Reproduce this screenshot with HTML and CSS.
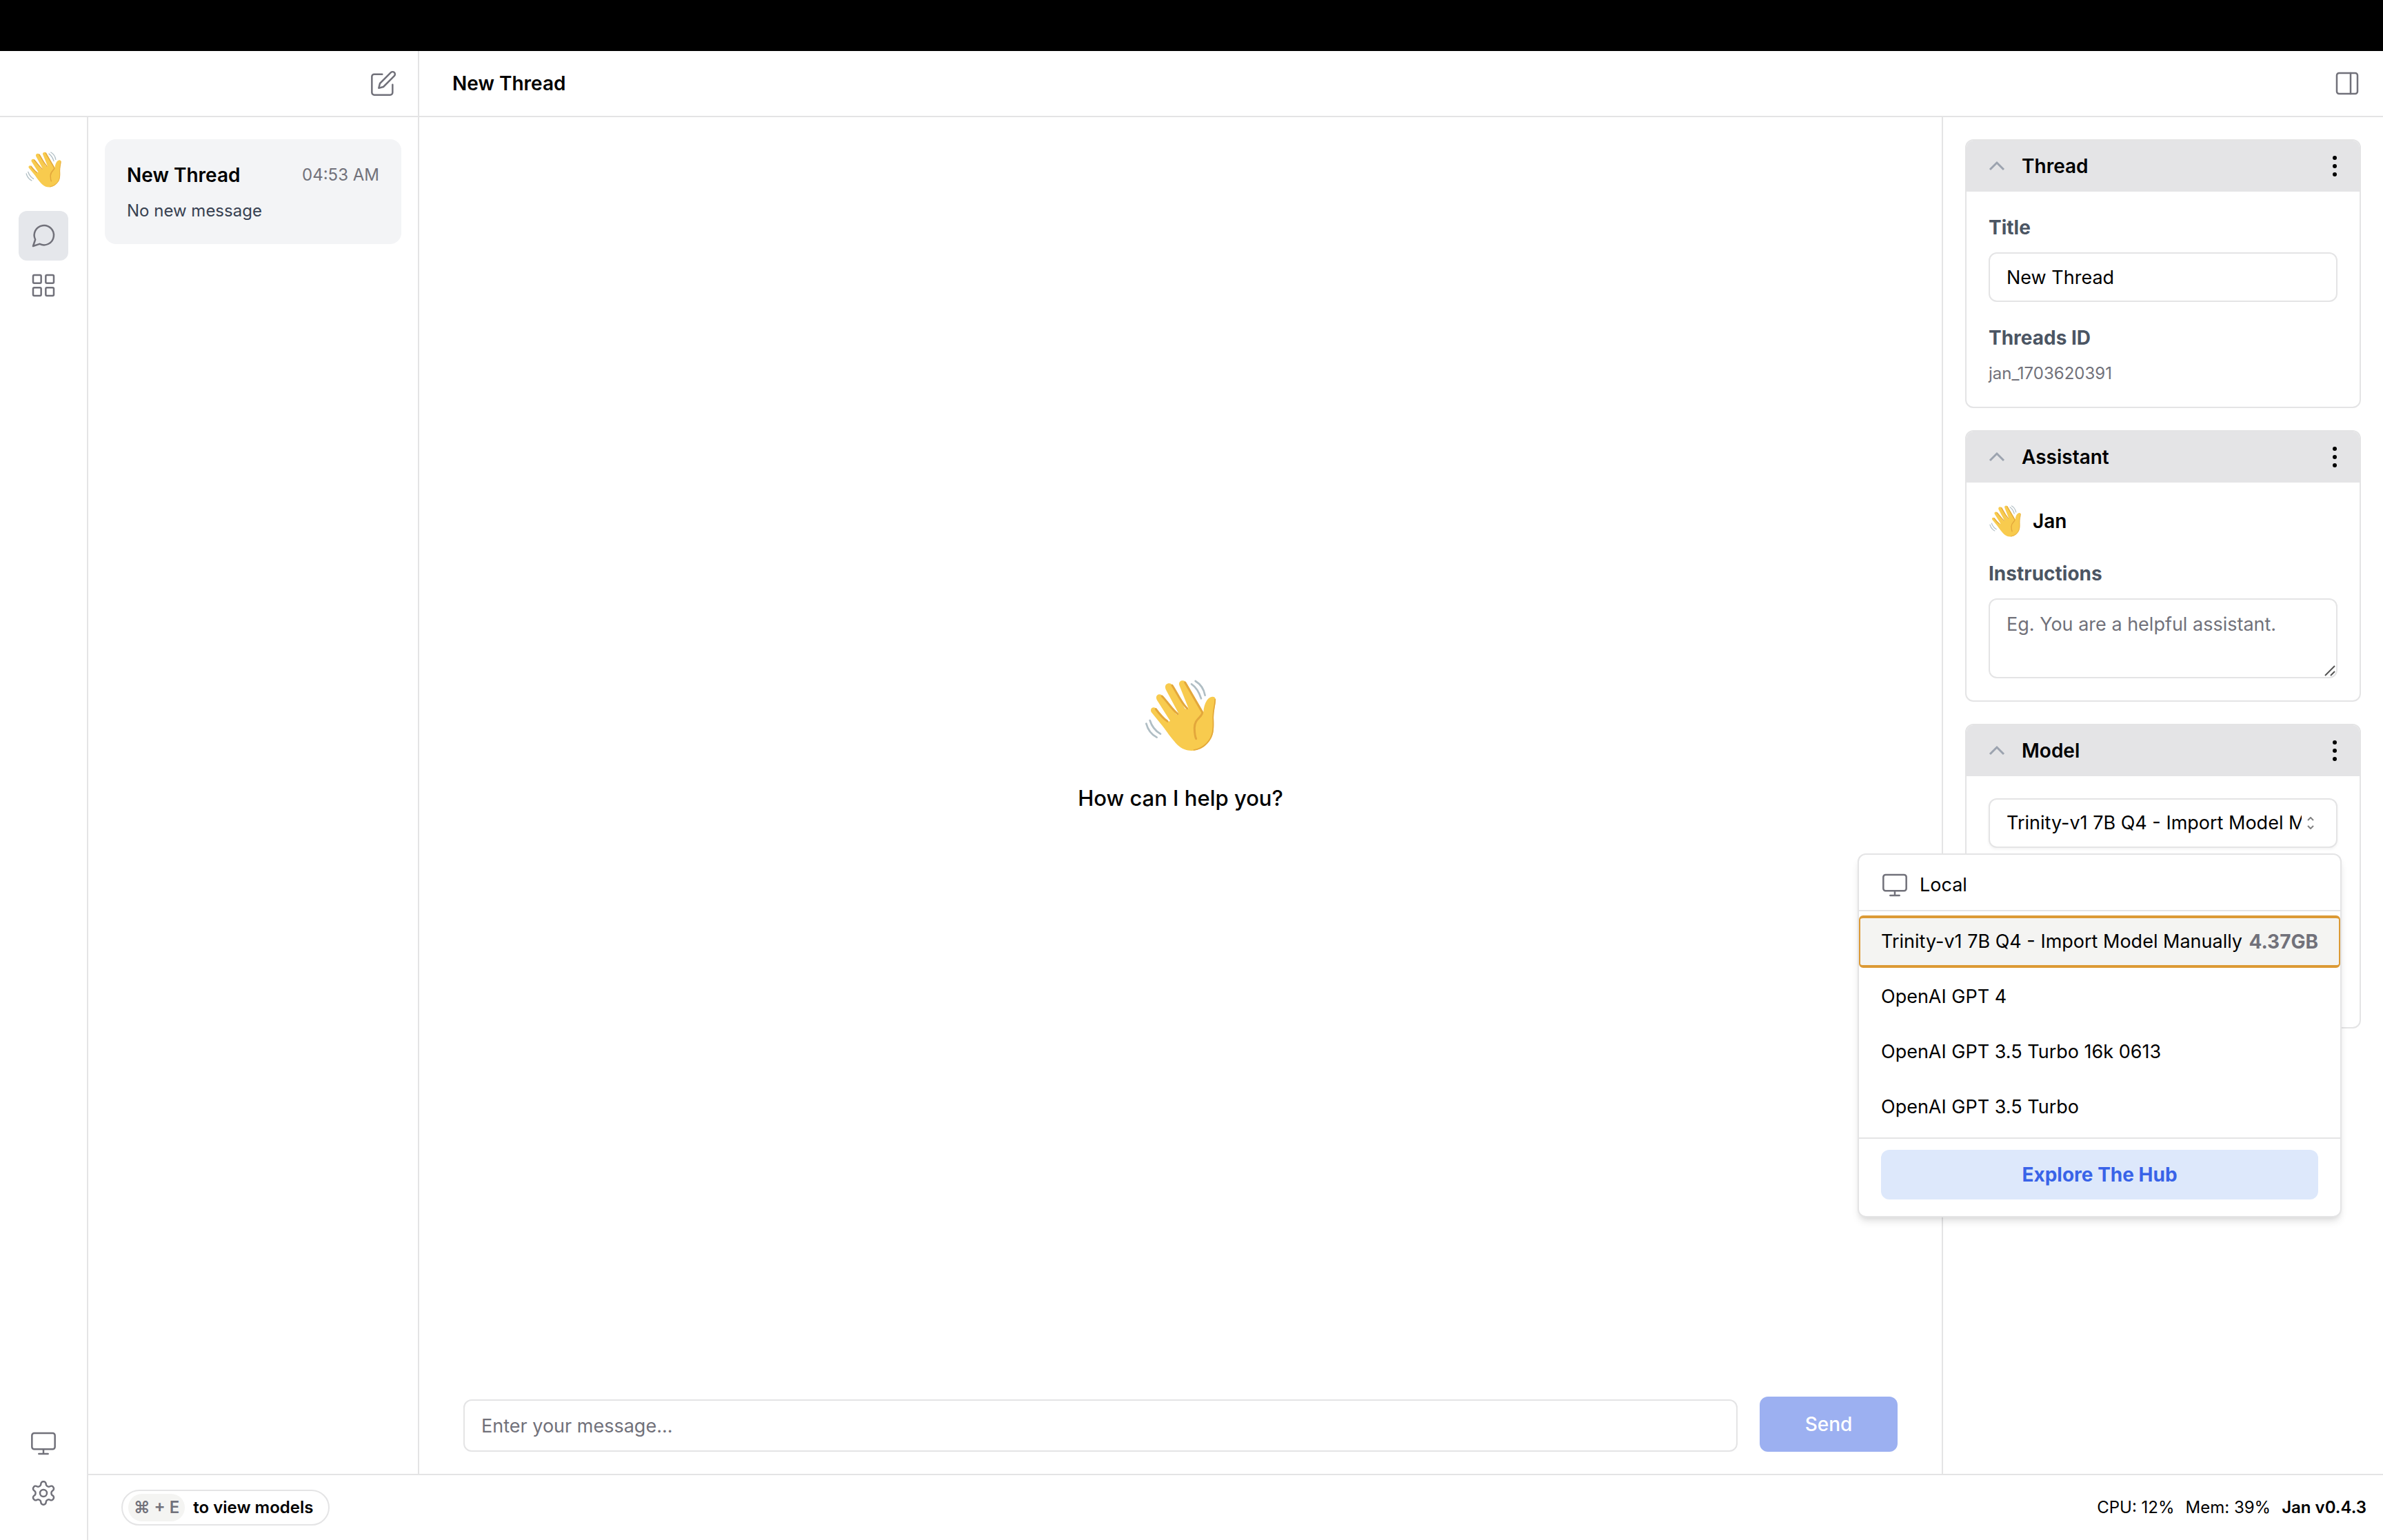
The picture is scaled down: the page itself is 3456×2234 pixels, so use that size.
FILE: index.html
```html
<!DOCTYPE html>
<html lang="en">
<head>
  <meta charset="utf-8">
  <meta name="viewport" content="width=device-width, initial-scale=1">
  <title>Jan</title>
  <link rel="stylesheet" href="styles.css">
</head>
<body>
  <svg class="sprite" aria-hidden="true">
    <symbol id="wave" viewBox="480 138 312 312">
      <path fill="#f8cb4e" d="M509 279C503 267 511 258 521 259C528 260 532 264 536 270L579 318Q586 322 591 317L534 227C526 213 534 202 545 202C552 202 557 206 562 212L617 288Q624 292 629 287L573 182C565 167 573 154 586 154C595 154 600 159 605 167L655 263Q664 268 671 263L632 165C626 151 635 142 645 142C654 142 659 147 664 156L736 279C737 250 750 215 774 212C785 211 790 218 789 230C787 252 780 272 780 305C782 355 782 386 752 417C725 447 684 452 655 442C628 432 613 411 598 393C582 372 568 352 557 338Z"/>
      <g fill="none" stroke="#e3a73b" stroke-width="9" stroke-linecap="round" stroke-linejoin="round">
        <path d="M529 266C542 284 560 306 579 319"/>
        <path d="M556 210C576 230 600 268 624 287"/>
        <path d="M600 163C616 186 640 240 665 263"/>
        <path d="M656 150L731 280C732 302 696 306 697 350Q698 382 704 395"/>
        <path stroke-width="5" d="M787 224C785 258 777 273 778 306C780 354 779 386 750 415Q727 439 694 444"/>
      </g>
      <g fill="none" stroke="#b0bec4" stroke-width="8" stroke-linecap="round">
        <path d="M487 329Q498 371 533 389"/>
        <path d="M503 315Q515 354 549 374"/>
        <path d="M684 157Q712 176 726 220"/>
        <path d="M701 144Q735 164 743 206"/>
      </g>
    </symbol>
    <symbol id="monitor" viewBox="0 0 24 24">
      <rect x="2" y="3" width="20" height="14" rx="2"/>
      <path d="M8 21h8M12 17v4"/>
    </symbol>
    <symbol id="chevron" viewBox="0 0 24 24">
      <path d="M2 17 12 7l10 10"/>
    </symbol>
    <symbol id="dots" viewBox="0 0 8 32">
      <circle cx="4" cy="4" r="3"/><circle cx="4" cy="16" r="3"/><circle cx="4" cy="28" r="3"/>
    </symbol>
  </svg>

  <div class="app">
    <div class="titlebar"></div>

    <header class="topbar">
      <div class="topbar-left">
        <button class="icon-button" type="button" aria-label="Create thread">
          <svg class="icon" viewBox="0 0 24 24"><path d="M11 4H4a2 2 0 0 0-2 2v14a2 2 0 0 0 2 2h14a2 2 0 0 0 2-2v-7"/><path d="M18.5 2.5a2.12 2.12 0 0 1 3 3L12 15l-4 1 1-4Z"/></svg>
        </button>
      </div>
      <div class="topbar-main">
        <h1 class="heading">New Thread</h1>
        <button class="icon-button" type="button" aria-label="Toggle panel">
          <svg class="icon" viewBox="0 0 24 24"><rect x="3" y="3" width="18" height="18" rx="2"/><path d="M15 3v18"/></svg>
        </button>
      </div>
    </header>

    <div class="body">
      <nav class="ribbon">
        <div class="ribbon-logo"><svg class="wave wave-nav"><use href="#wave"/></svg></div>
        <a class="ribbon-item active" href="#thread" aria-label="Thread">
          <svg class="icon" viewBox="0 0 24 24"><path d="m3 21 1.9-5.7a8.5 8.5 0 1 1 3.8 3.8z"/></svg>
        </a>
        <a class="ribbon-item" href="#hub" aria-label="Hub">
          <svg class="icon" viewBox="0 0 24 24"><rect x="3" y="3" width="7" height="7" rx="1"/><rect x="14" y="3" width="7" height="7" rx="1"/><rect x="14" y="14" width="7" height="7" rx="1"/><rect x="3" y="14" width="7" height="7" rx="1"/></svg>
        </a>
        <a class="ribbon-item ribbon-bottom" href="#system" aria-label="System monitor">
          <svg class="icon"><use href="#monitor"/></svg>
        </a>
        <a class="ribbon-item" href="#settings" aria-label="Settings">
          <svg class="icon" viewBox="0 0 24 24"><path d="M12.22 2h-.44a2 2 0 0 0-2 2v.18a2 2 0 0 1-1 1.73l-.43.25a2 2 0 0 1-2 0l-.15-.08a2 2 0 0 0-2.73.73l-.22.38a2 2 0 0 0 .73 2.73l.15.1a2 2 0 0 1 1 1.72v.51a2 2 0 0 1-1 1.74l-.15.09a2 2 0 0 0-.73 2.73l.22.38a2 2 0 0 0 2.73.73l.15-.08a2 2 0 0 1 2 0l.43.25a2 2 0 0 1 1 1.73V20a2 2 0 0 0 2 2h.44a2 2 0 0 0 2-2v-.18a2 2 0 0 1 1-1.73l.43-.25a2 2 0 0 1 2 0l.15.08a2 2 0 0 0 2.73-.73l.22-.39a2 2 0 0 0-.73-2.73l-.15-.08a2 2 0 0 1-1-1.74v-.5a2 2 0 0 1 1-1.74l.15-.09a2 2 0 0 0 .73-2.73l-.22-.38a2 2 0 0 0-2.73-.73l-.15.08a2 2 0 0 1-2 0l-.43-.25a2 2 0 0 1-1-1.73V4a2 2 0 0 0-2-2z"/><circle cx="12" cy="12" r="3"/></svg>
        </a>
      </nav>

      <div class="workspace">
        <div class="columns">
          <aside class="threads">
            <a class="thread" href="#new-thread">
              <span class="thread-top">
                <span class="heading">New Thread</span>
                <time class="small muted">04:53 AM</time>
              </span>
              <span class="small thread-note">No new message</span>
            </a>
          </aside>

          <main class="chat">
            <div class="welcome">
              <svg class="wave wave-large"><use href="#wave"/></svg>
              <p class="welcome-text">How can I help you?</p>
            </div>
            <form class="composer">
              <input class="field composer-input" type="text" aria-label="Message" placeholder="Enter your message...">
              <button class="send" type="button" disabled>Send</button>
            </form>
          </main>

          <aside class="panel">
            <section class="card">
              <header class="card-head">
                <svg class="chevron"><use href="#chevron"/></svg>
                <h2 class="heading">Thread</h2>
                <button class="icon-button card-menu" type="button" aria-label="Thread options"><svg class="dots"><use href="#dots"/></svg></button>
              </header>
              <div class="card-body">
                <label class="label" for="title">Title</label>
                <input class="field" id="title" type="text" value="New Thread">
                <p class="label label-next">Threads ID</p>
                <p class="small muted">jan_1703620391</p>
              </div>
            </section>

            <section class="card">
              <header class="card-head">
                <svg class="chevron"><use href="#chevron"/></svg>
                <h2 class="heading">Assistant</h2>
                <button class="icon-button card-menu" type="button" aria-label="Assistant options"><svg class="dots"><use href="#dots"/></svg></button>
              </header>
              <div class="card-body">
                <div class="assistant"><svg class="wave wave-small"><use href="#wave"/></svg><span class="heading">Jan</span></div>
                <label class="label label-next" for="instructions">Instructions</label>
                <div class="area-wrap">
                  <textarea class="field area" id="instructions" placeholder="Eg. You are a helpful assistant."></textarea>
                  <svg class="grip" viewBox="0 0 16 16"><path d="M1 15 15 1M9 15l6-6"/></svg>
                </div>
              </div>
            </section>

            <section class="card">
              <header class="card-head">
                <svg class="chevron"><use href="#chevron"/></svg>
                <h2 class="heading">Model</h2>
                <button class="icon-button card-menu" type="button" aria-label="Model options"><svg class="dots"><use href="#dots"/></svg></button>
              </header>
              <div class="card-body model-body">
                <div class="select-wrap">
                  <select class="field select" aria-label="Model">
                    <option>Trinity-v1 7B Q4 - Import Model Manually</option>
                  </select>
                  <svg class="select-arrows" viewBox="0 0 12 18"><path d="M2 5l4-4 4 4M2 13l4 4 4-4"/></svg>
                  <div class="menu">
                    <div class="menu-head"><svg class="icon"><use href="#monitor"/></svg><span>Local</span></div>
                    <ul class="menu-list" role="listbox" aria-label="Models">
                      <li class="option selected" role="option" aria-selected="true"><span>Trinity-v1 7B Q4 - Import Model Manually</span><span class="size">4.37GB</span></li>
                      <li class="option" role="option">OpenAI GPT 4</li>
                      <li class="option" role="option">OpenAI GPT 3.5 Turbo 16k 0613</li>
                      <li class="option" role="option">OpenAI GPT 3.5 Turbo</li>
                    </ul>
                    <div class="menu-foot"><button class="explore" type="button">Explore The Hub</button></div>
                  </div>
                </div>
              </div>
            </section>
          </aside>
        </div>

        <footer class="status">
          <button class="shortcut" type="button"><kbd class="keys">⌘ + E</kbd><span>to view models</span></button>
          <div class="stats"><span>CPU: 12%</span><span>Mem: 39%</span><strong class="version">Jan v0.4.3</strong></div>
        </footer>
      </div>
    </div>
  </div>
</body>
</html>
```
FILE: styles.css
```css
:root {
  --line: #e4e4e5;
  --muted: #71717a;
  --label: #4b5563;
}

* { box-sizing: border-box; }

body {
  margin: 0;
  background: #fff;
  color: #000;
  font-family: Inter, "Liberation Sans", sans-serif;
  font-size: 27px;
  line-height: 40px;
}

h1, h2, p, ul { margin: 0; padding: 0; }
button, input, select, textarea { font: inherit; color: inherit; }
button { cursor: pointer; }
a { color: inherit; text-decoration: none; }

.sprite { position: absolute; width: 0; height: 0; }

.icon {
  display: block;
  flex: none;
  width: 40px;
  height: 40px;
  fill: none;
  stroke: var(--muted);
  stroke-width: 1.5;
  stroke-linecap: round;
  stroke-linejoin: round;
}

.icon-button { padding: 0; border: 0; background: none; }
.heading { font-size: 28px; font-weight: 600; line-height: 40px; }
.small { font-size: 24px; line-height: 32px; }
.muted { color: var(--muted); }

.wave { display: block; flex: none; }
.wave-nav { width: 52px; height: 52px; }
.wave-large { width: 104px; height: 104px; }
.wave-small { width: 48px; height: 46px; }

/* Shell */
.app { display: flex; flex-direction: column; height: 100vh; }
.titlebar { flex: none; height: 74px; background: #000; }
.topbar { display: flex; flex: none; height: 96px; border-bottom: 2px solid var(--line); }

.topbar-left {
  display: flex;
  align-items: center;
  justify-content: flex-end;
  width: 608px;
  padding-right: 30px;
  border-right: 2px solid var(--line);
}

.topbar-main {
  display: flex;
  flex: 1;
  align-items: center;
  justify-content: space-between;
  padding: 0 32px 0 48px;
}

.body { display: flex; flex: 1; min-height: 0; }

.ribbon {
  display: flex;
  flex: none;
  flex-direction: column;
  align-items: center;
  width: 128px;
  padding: 32px 0;
  border-right: 2px solid var(--line);
}

.ribbon-logo { display: grid; place-items: center; height: 88px; margin-bottom: 16px; }
.ribbon-item { display: grid; place-items: center; width: 72px; height: 72px; border-radius: 12px; }
.ribbon-item.active { background: #e5e7eb; }
.ribbon-bottom { margin-top: auto; }

.workspace { display: flex; flex: 1; flex-direction: column; min-width: 0; }
.columns { display: flex; flex: 1; min-height: 0; }

/* Thread list */
.threads { flex: none; width: 480px; padding: 32px 24px; border-right: 2px solid var(--line); }

.thread {
  display: flex;
  flex-direction: column;
  gap: 16px;
  padding: 32px;
  border-radius: 16px;
  background: #f3f4f6;
}

.thread-top { display: flex; align-items: center; justify-content: space-between; }
.thread-note { color: #374151; }

/* Conversation */
.chat { display: flex; flex: 1; flex-direction: column; min-width: 0; }

.welcome {
  display: flex;
  flex: 1;
  flex-direction: column;
  align-items: center;
  justify-content: center;
  gap: 48px;
}

.welcome-text { font-size: 31px; font-weight: 500; line-height: 40px; }
.composer { display: flex; align-items: flex-end; gap: 32px; padding: 32px 64px; }

.field {
  display: block;
  width: 100%;
  height: 72px;
  padding: 0 24px;
  border: 2px solid var(--line);
  border-radius: 12px;
  outline: 0;
  background: #fff;
}

.field::placeholder { color: var(--muted); opacity: 1; }
.composer-input { height: 76px; }

.send {
  flex: none;
  width: 200px;
  height: 80px;
  border: 0;
  border-radius: 12px;
  background: #9cb0f1;
  color: #fff;
  font-size: 28px;
  font-weight: 500;
}

/* Settings panel */
.panel {
  display: flex;
  flex: none;
  flex-direction: column;
  gap: 32px;
  width: 640px;
  padding: 32px;
  border-left: 2px solid var(--line);
}

.card { border: 2px solid var(--line); border-radius: 12px; }

.card-head {
  display: flex;
  align-items: center;
  gap: 24px;
  height: 74px;
  padding: 0 32px;
  border-radius: 10px 10px 0 0;
  background: #e4e4e6;
}

.chevron { width: 24px; height: 24px; fill: none; stroke: #9ca3af; stroke-width: 3; }
.card-menu { display: flex; margin-left: auto; }
.dots { width: 8px; height: 32px; }
.card-body { padding: 32px; }
.label { display: block; margin-bottom: 16px; color: var(--label); font-size: 28px; font-weight: 700; }
.label-next { margin-top: 32px; }
.assistant { display: flex; align-items: center; gap: 16px; height: 48px; }
.area-wrap { position: relative; }
.area { height: 116px; padding: 16px 24px; resize: none; }

.grip {
  position: absolute;
  right: 3px;
  bottom: 3px;
  width: 16px;
  height: 16px;
  fill: none;
  stroke: #555;
  stroke-width: 2;
}

.model-body { min-height: 364px; }
.select-wrap { position: relative; }
.select { appearance: none; padding: 0 50px 0 24px; box-shadow: 0 2px 4px rgb(0 0 0 / 5%); }

.select-arrows {
  position: absolute;
  top: 27px;
  right: 33px;
  width: 12px;
  height: 18px;
  fill: none;
  stroke: #808080;
  stroke-width: 2;
}

/* Model menu */
.menu {
  position: absolute;
  top: 80px;
  right: -6px;
  width: 702px;
  border: 2px solid var(--line);
  border-radius: 12px;
  background: #fff;
  box-shadow: 0 8px 12px -2px rgb(0 0 0 / 10%), 0 4px 8px -4px rgb(0 0 0 / 10%);
}

.menu-head {
  display: flex;
  align-items: center;
  gap: 16px;
  padding: 24px 32px 16px;
  border-bottom: 2px solid var(--line);
}

.menu-list { display: flex; flex-direction: column; gap: 4px; padding: 6px 0; list-style: none; }

.option {
  display: flex;
  align-items: center;
  justify-content: space-between;
  height: 76px;
  padding: 0 30px;
  border: solid transparent;
  border-width: 4px 2px;
  border-radius: 6px;
  white-space: nowrap;
}

.option.selected { border-color: #dc9a35; background: #f4f4f2; }
.size { color: var(--muted); font-size: 28px; font-weight: 700; }
.menu-foot { padding: 16px 32px 24px; border-top: 2px solid var(--line); }

.explore {
  display: block;
  width: 100%;
  height: 72px;
  border: 0;
  border-radius: 12px;
  background: #dde8fb;
  color: #3963e8;
  font-size: 28px;
  font-weight: 700;
}

/* Status bar */
.status {
  display: flex;
  flex: none;
  align-items: center;
  justify-content: space-between;
  height: 96px;
  padding: 0 24px 0 48px;
  border-top: 2px solid var(--line);
  font-size: 24px;
  line-height: 32px;
}

.shortcut {
  display: flex;
  align-items: center;
  gap: 12px;
  height: 52px;
  padding: 0 22px 0 8px;
  border: 2px solid var(--line);
  border-radius: 26px;
  background: #fff;
  font-weight: 600;
}

.keys {
  height: 40px;
  padding: 0 8px;
  border-radius: 20px;
  background: #f4f4f2;
  color: var(--muted);
  font: inherit;
  line-height: 40px;
}

.stats { display: flex; gap: 16px; }
.version { font-weight: 600; }
```
